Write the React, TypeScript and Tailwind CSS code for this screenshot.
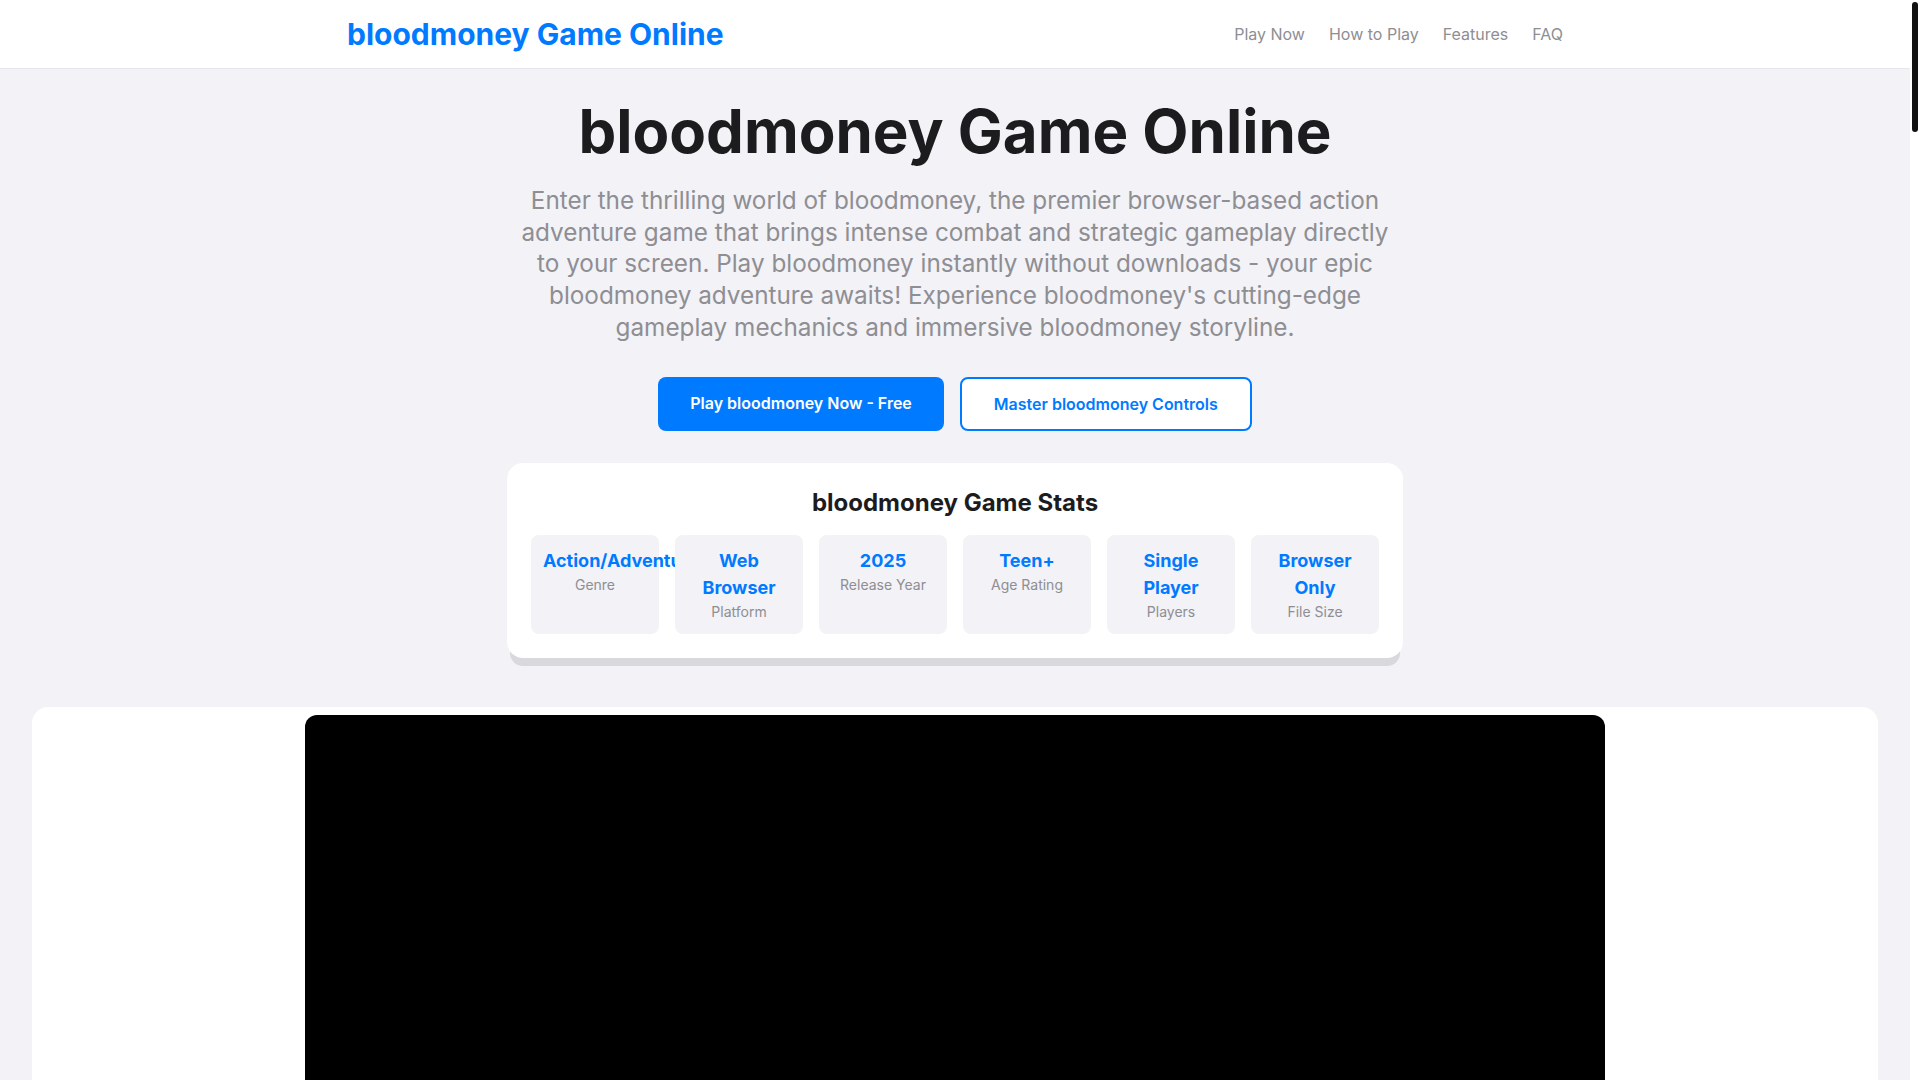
import type { ReactNode } from 'react';

// Landing page for the browser game: top bar, hero, quick stats, the game frame and info sections.

const NAV = ['Play Now', 'How to Play', 'Features', 'FAQ'];

const STATS: { value: string; label: string }[] = [
  { value: 'Action/Adventure', label: 'Genre' },
  { value: 'Web Browser', label: 'Platform' },
  { value: '2025', label: 'Release Year' },
  { value: 'Teen+', label: 'Age Rating' },
  { value: 'Single Player', label: 'Players' },
  { value: 'Browser Only', label: 'File Size' },
];

const STEPS = [
  'Click the Play button above to load bloodmoney directly in your browser.',
  'Use the mouse to interact with characters and objects in the world.',
  'Make choices carefully - every decision shapes how the story unfolds.',
  'Manage your resources and keep an eye on the money counter.',
  'Explore every path to discover all of the hidden endings.',
];

const CONTROLS = [
  { key: 'Left Click', action: 'Select, interact and confirm choices' },
  { key: 'Mouse Move', action: 'Aim and look around the scene' },
  { key: 'Space', action: 'Skip dialogue and advance text' },
  { key: 'Esc', action: 'Pause the game and open the menu' },
  { key: 'M', action: 'Mute or unmute the soundtrack' },
  { key: 'F', action: 'Toggle full screen mode' },
];

const FEATURES = [
  { title: 'Instant Play', body: 'No downloads or installs. bloodmoney runs right in your browser on desktop and mobile.' },
  { title: 'Branching Story', body: 'Your decisions change the outcome, with multiple endings to uncover.' },
  { title: 'Dark Atmosphere', body: 'Hand-crafted visuals and sound design create an unsettling, immersive mood.' },
  { title: 'Strategic Choices', body: 'Balance risk against reward as the stakes climb with every click.' },
  { title: 'Free Forever', body: 'Play the full bloodmoney experience without paying a cent.' },
  { title: 'Save Progress', body: 'Come back anytime and pick up right where you left off.' },
];

const TIPS = [
  { title: 'Take your time', body: 'There is no timer on most decisions. Read every line of dialogue before you act.' },
  { title: 'Watch the counter', body: 'The money counter tells you more than you think about where the story is heading.' },
  { title: 'Try again', body: 'Replaying with different choices is the only way to see every bloodmoney ending.' },
  { title: 'Use headphones', body: 'Audio cues hint at what is coming next, so play with sound on.' },
];

const MORE_GAMES = [
  'Blood Tycoon', 'Cash Clicker', 'Dark Deals', 'Night Shift',
  'Harvest Moon Inc.', 'Red Ledger', 'Midnight Market', 'Grim Bargain',
  'Coin Cult', 'Lucky Knife', 'Debt Collector', 'Last Payday',
];

const FAQ = [
  { q: 'Is bloodmoney free to play?', a: 'Yes. bloodmoney is completely free and runs in any modern web browser.' },
  { q: 'Do I need to download anything?', a: 'No downloads are required. Just press play and the game loads instantly.' },
  { q: 'Can I play bloodmoney on mobile?', a: 'Yes, the game works on phones and tablets as well as on desktop computers.' },
  { q: 'How long does a playthrough take?', a: 'A single run takes around 30 to 60 minutes, depending on your choices.' },
  { q: 'How many endings are there?', a: 'There are several endings. Try different decisions to see them all.' },
  { q: 'Is bloodmoney suitable for kids?', a: 'The game contains mature themes and is recommended for teens and older.' },
  { q: 'Does the game save my progress?', a: 'Progress is stored in your browser, so you can continue later on the same device.' },
  { q: 'Why is the game not loading?', a: 'Try refreshing the page or disabling browser extensions that block scripts.' },
];

function Section({ title, children }: { title: string; children: ReactNode }): JSX.Element {
  return (
    <section className="mx-auto max-w-[1216px] py-20">
      <h2 className="mb-10 text-center text-[36px] font-bold text-[#1c1c1e]">{title}</h2>
      {children}
    </section>
  );
}

// thin page scrollbar, thumb parked at the top
function ScrollRail(): JSX.Element {
  return (
    <div className="w-[10px] shrink-0 bg-white px-[2px] pt-[2px]">
      <div className="h-[130px] rounded-full bg-[#111]" />
    </div>
  );
}

export default function App(): JSX.Element {
  return (
    <div className="flex h-screen font-['Inter','Noto_Sans',sans-serif] text-[#1c1c1e]">
      <div className="min-w-0 flex-1 overflow-y-auto bg-[#f2f2f7] [scrollbar-width:none]">
        <header className="border-b border-[#e5e5ea] bg-white">
          <div className="mx-auto flex h-[68px] max-w-[1216px] items-center justify-between">
            <a href="#" className="text-[30px] font-bold text-[#007aff]">
              bloodmoney Game Online
            </a>
            <nav className="flex gap-6 text-base text-[#8e8e93]">
              {NAV.map((n) => (
                <a key={n} href="#">
                  {n}
                </a>
              ))}
            </nav>
          </div>
        </header>

        <main>
          <section className="mx-auto flex max-w-[1216px] flex-col items-center pt-[26px] text-center">
            <h1 className="text-[60px] leading-[1.2] font-bold">bloodmoney Game Online</h1>
            <p className="mt-[18px] max-w-[880px] text-[24.3px] leading-[31.7px] text-[#8e8e93]">
              Enter the thrilling world of bloodmoney, the premier browser-based action adventure game that brings
              intense combat and strategic gameplay directly to your screen. Play bloodmoney instantly without
              downloads - your epic bloodmoney adventure awaits! Experience bloodmoney's cutting-edge gameplay
              mechanics and immersive bloodmoney storyline.
            </p>
            <div className="mt-[33px] flex gap-4">
              <a href="#" className="rounded-lg bg-[#007aff] px-8 pt-[14px] pb-[16px] text-base leading-6 font-semibold text-white">
                Play bloodmoney Now - Free
              </a>
              <a
                href="#"
                className="rounded-lg border-2 border-[#007aff] bg-white px-8 py-[13px] text-base leading-6 font-semibold text-[#007aff]"
              >
                Master bloodmoney Controls
              </a>
            </div>

            <div className="mt-8 w-full max-w-4xl rounded-2xl bg-white p-6 shadow-[0_11px_0_-3px_#d8d8dd]">
              <h2 className="mb-4 text-2xl font-bold">bloodmoney Game Stats</h2>
              <div className="grid grid-cols-6 gap-4">
                {STATS.map((s) => (
                  <div key={s.label} className="relative rounded-lg bg-[#f2f2f7] p-3">
                    <div className="text-[18px] leading-[1.5] font-bold text-[#007aff]">{s.value}</div>
                    <div className="text-sm leading-[1.5] text-[#8e8e93]">{s.label}</div>
                  </div>
                ))}
              </div>
            </div>
          </section>

          <section className="mx-8 mt-[49px] rounded-2xl bg-white px-2 pt-2 pb-8">
            <div className="mx-auto h-[820px] max-w-[1300px] rounded-xl bg-black" />
          </section>

          <Section title="How to Play bloodmoney">
            <ol className="mx-auto max-w-[896px] space-y-4">
              {STEPS.map((s, i) => (
                <li key={i} className="flex gap-4 rounded-xl bg-white p-6 text-lg text-[#3a3a3c]">
                  <span className="flex h-8 w-8 shrink-0 items-center justify-center rounded-full bg-[#007aff] text-base font-bold text-white">
                    {i + 1}
                  </span>
                  {s}
                </li>
              ))}
            </ol>
          </Section>

          <Section title="bloodmoney Controls">
            <div className="mx-auto max-w-[896px] overflow-hidden rounded-2xl bg-white">
              {CONTROLS.map((c) => (
                <div key={c.key} className="flex items-center gap-6 border-b border-[#e5e5ea] px-8 py-6 last:border-b-0">
                  <span className="w-40 rounded-md bg-[#f2f2f7] px-3 py-2 text-center font-mono text-base font-semibold text-[#007aff]">
                    {c.key}
                  </span>
                  <span className="text-lg text-[#3a3a3c]">{c.action}</span>
                </div>
              ))}
            </div>
          </Section>

          <Section title="bloodmoney Features">
            <div className="grid grid-cols-3 gap-6">
              {FEATURES.map((f) => (
                <div key={f.title} className="rounded-2xl bg-white p-8">
                  <div className="mb-6 h-40 rounded-xl bg-[#f2f2f7]" />
                  <h3 className="mb-3 text-xl font-bold text-[#007aff]">{f.title}</h3>
                  <p className="text-base leading-relaxed text-[#8e8e93]">{f.body}</p>
                </div>
              ))}
            </div>
          </Section>

          <Section title="Tips for New Players">
            <div className="grid grid-cols-2 gap-6">
              {TIPS.map((t) => (
                <div key={t.title} className="rounded-2xl bg-white p-10">
                  <h3 className="mb-3 text-2xl font-bold">{t.title}</h3>
                  <p className="text-lg leading-relaxed text-[#8e8e93]">{t.body}</p>
                </div>
              ))}
            </div>
          </Section>

          <Section title="More Games Like bloodmoney">
            <div className="grid grid-cols-4 gap-6">
              {MORE_GAMES.map((g) => (
                <div key={g} className="overflow-hidden rounded-2xl bg-white">
                  <div className="h-48 bg-[#1c1c1e]" />
                  <div className="p-5 text-lg font-semibold">{g}</div>
                </div>
              ))}
            </div>
          </Section>

          <Section title="Frequently Asked Questions">
            <div className="mx-auto max-w-[896px] space-y-4">
              {FAQ.map((f) => (
                <div key={f.q} className="rounded-xl bg-white p-6">
                  <h3 className="mb-2 text-lg font-semibold">{f.q}</h3>
                  <p className="text-base leading-relaxed text-[#8e8e93]">{f.a}</p>
                </div>
              ))}
            </div>
          </Section>
        </main>

        <footer className="mt-10 border-t border-[#e5e5ea] bg-white py-12 text-center text-sm text-[#8e8e93]">
          © 2025 bloodmoney Game Online. All rights reserved.
        </footer>
      </div>
      <ScrollRail />
    </div>
  );
}
